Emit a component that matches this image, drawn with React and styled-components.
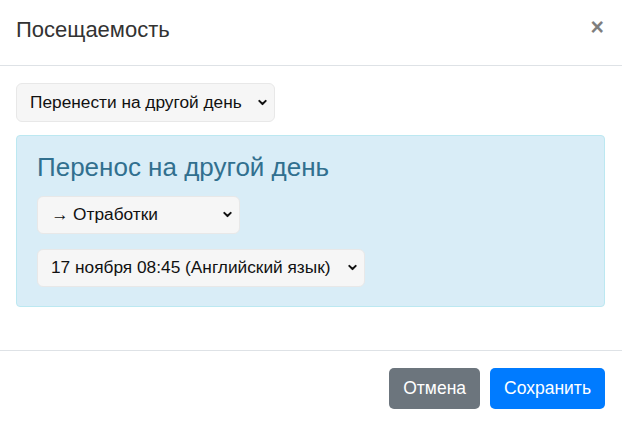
import React from "react";
import styled, { createGlobalStyle } from "styled-components";

const GlobalStyle = createGlobalStyle`
  html, body {
    margin: 0;
    padding: 0;
    background: #ffffff;
  }
  body {
    font-family: "Liberation Sans", Arial, sans-serif;
    color: #212529;
  }
  * { box-sizing: border-box; }
`;

const Modal = styled.div`
  width: 622px;
  height: 428px;
  display: flex;
  flex-direction: column;
  background: #fff;
  border-radius: 6px;
`;

const Header = styled.div`
  display: flex;
  align-items: center;
  justify-content: space-between;
  height: 66px;
  padding: 0 16px 6px;
  border-bottom: 1px solid #dee2e6;
`;

const Title = styled.h5`
  margin: 0;
  font-size: 22px;
  font-weight: 400;
  color: #333;
  line-height: 1;
`;

const Close = styled.button`
  border: 0;
  background: none;
  padding: 0 2px 4px 0;
  font-family: "Liberation Sans", Arial, sans-serif;
  font-size: 23px;
  font-weight: 700;
  line-height: 1;
  color: #000;
  opacity: 0.5;
  cursor: pointer;
`;

const Body = styled.div`
  flex: 1;
  padding: 17px 17px 16px 16px;
  display: flex;
  flex-direction: column;
  align-items: flex-start;
`;

const Select = styled.div`
  display: inline-flex;
  align-items: center;
  justify-content: space-between;
  width: ${(p) => p.$width}px;
  height: ${(p) => p.$height || 39}px;
  padding: 0 6px 0 13px;
  margin-bottom: ${(p) => p.$mb || 0}px;
  background: #f6f6f6;
  border: 1px solid #e8e8e8;
  border-radius: 6px;
  font-size: 17.3px;
  color: #111;
  white-space: nowrap;

  svg {
    flex-shrink: 0;
  }
`;

const Chevron = () => (
  <svg width="11" height="11" viewBox="0 0 12 12">
    <path d="M2.5 4.2l3.5 3.5 3.5-3.5" fill="none" stroke="#111" strokeWidth="2.2" strokeLinecap="round" strokeLinejoin="round" />
  </svg>
);

const Alert = styled.div`
  align-self: stretch;
  margin-top: 13px;
  padding: 15px 20px 19px;
  background: #d9edf7;
  border: 1px solid #bce8f1;
  border-radius: 4px;
  display: flex;
  flex-direction: column;
  align-items: flex-start;
`;

const AlertHeading = styled.h4`
  margin: 0 0 11px;
  font-size: 26px;
  font-weight: 400;
  line-height: 1.3;
  color: #31708f;
`;

const Footer = styled.div`
  display: flex;
  justify-content: flex-end;
  align-items: center;
  gap: 10px;
  padding: 17px 17px 19px;
  border-top: 1px solid #dee2e6;
`;

const Button = styled.button`
  height: 41px;
  padding: 0 14px;
  border: 0;
  border-radius: 5px;
  font-family: "Liberation Sans", Arial, sans-serif;
  font-size: 17.5px;
  color: #fff;
  background: ${(p) => (p.$primary ? "#007bff" : "#6c757d")};
  cursor: pointer;
`;

export default function App() {
  return (
    <>
      <GlobalStyle />
      <Modal>
        <Header>
          <Title>Посещаемость</Title>
          <Close>×</Close>
        </Header>
        <Body>
          <Select $width={259}>
            Перенести на другой день
            <Chevron />
          </Select>
          <Alert>
            <AlertHeading>Перенос на другой день</AlertHeading>
            <Select $width={203} $height={38} $mb={15}>
              → Отработки
              <Chevron />
            </Select>
            <Select $width={328} $height={38}>
              17 ноября 08:45 (Английский язык)
              <Chevron />
            </Select>
          </Alert>
        </Body>
        <Footer>
          <Button>Отмена</Button>
          <Button $primary>Сохранить</Button>
        </Footer>
      </Modal>
    </>
  );
}
